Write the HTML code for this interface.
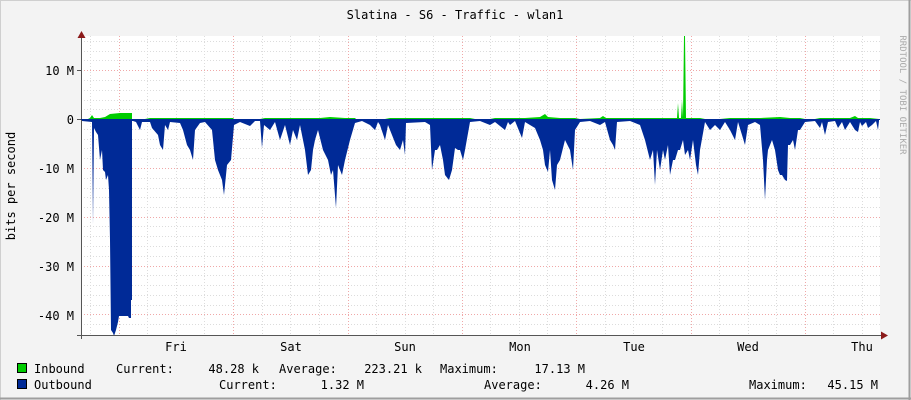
<!DOCTYPE html>
<html><head><meta charset="utf-8"><style>
html,body{margin:0;padding:0;background:#f3f3f3;}
svg{display:block;}
text{font-family:"DejaVu Sans Mono","Liberation Mono",monospace;font-size:12px;fill:#000;}
</style></head><body>
<svg width="911" height="400" xmlns="http://www.w3.org/2000/svg">
<rect x="0" y="0" width="911" height="400" fill="#f3f3f3"/>
<line x1="0" y1="0.5" x2="911" y2="0.5" stroke="#cfcfcf"/>
<line x1="0.5" y1="0" x2="0.5" y2="400" stroke="#cfcfcf"/>
<line x1="909.5" y1="0" x2="909.5" y2="400" stroke="#9e9e9e" stroke-width="2"/>
<line x1="0" y1="398.5" x2="911" y2="398.5" stroke="#9e9e9e" stroke-width="2"/>
<rect x="81" y="36" width="799" height="299" fill="#fff"/>
<g stroke="#dcdcdc" stroke-dasharray="1,2" stroke-width="1">
<path d="M81 41.5H880M81 51.5H880M81 60.5H880M81 80.5H880M81 90.5H880M81 100.5H880M81 109.5H880M81 129.5H880M81 139.5H880M81 148.5H880M81 158.5H880M81 178.5H880M81 188.5H880M81 197.5H880M81 207.5H880M81 226.5H880M81 236.5H880M81 246.5H880M81 256.5H880M81 275.5H880M81 285.5H880M81 295.5H880M81 305.5H880M81 324.5H880"/>
<path d="M90.5 36V335M147.5 36V335M176.5 36V335M204.5 36V335M262.5 36V335M290.5 36V335M319.5 36V335M376.5 36V335M405.5 36V335M433.5 36V335M490.5 36V335M519.5 36V335M547.5 36V335M605.5 36V335M633.5 36V335M662.5 36V335M719.5 36V335M748.5 36V335M776.5 36V335M833.5 36V335M862.5 36V335"/>
</g>
<g stroke="#f0a8a8" stroke-dasharray="1,2" stroke-width="1">
<path d="M81 70.5H880M81 168.5H880M81 217.5H880M81 266.5H880M81 314.5H880"/>
<path d="M119.5 36V335M233.5 36V335M348.5 36V335M462.5 36V335M576.5 36V335M691.5 36V335M805.5 36V335"/>
</g>
<path fill="#002a97" d="M82 119 L82 121 L92 122 L93 224 L94 128 L96 132 L98 135 L100 160 L102 150 L103 170 L105 172 L106 180 L108 175 L109 190 L110 240 L111 330 L113 333 L114 336 L116 330 L118 322 L119 316 L128 316 L129 318 L131 318 L131 300 L132 300 L132 121 L133 121 L136 122 L140 130 L142 122 L150 122 L152 128 L158 135 L160 145 L163 150 L165 125 L168 130 L170 122 L180 123 L183 130 L187 145 L190 150 L193 160 L195 130 L200 123 L205 122 L212 130 L215 160 L218 170 L222 180 L224 195 L227 165 L231 160 L234 125 L240 122 L250 126 L255 121 L260 121 L262 148 L264 125 L270 130 L275 122 L280 140 L285 125 L290 145 L293 130 L297 140 L300 125 L305 150 L308 175 L311 170 L313 150 L315 140 L318 130 L323 150 L328 160 L331 175 L333 170 L336 208 L338 165 L342 175 L345 160 L350 140 L355 123 L362 121 L370 125 L375 130 L378 122 L380 125 L385 140 L388 125 L396 145 L400 150 L403 140 L405 155 L406 123 L425 122 L430 125 L432 170 L435 150 L437 150 L440 145 L443 160 L445 175 L449 180 L452 170 L455 148 L458 150 L460 150 L463 160 L465 150 L470 122 L480 121 L490 125 L495 122 L500 126 L505 130 L508 122 L510 125 L515 121 L522 138 L525 122 L535 128 L540 140 L543 150 L545 165 L548 172 L550 150 L552 180 L555 190 L557 165 L560 160 L565 140 L570 150 L573 170 L575 130 L580 122 L590 121 L600 125 L605 122 L610 140 L613 145 L615 150 L617 122 L630 121 L640 125 L645 140 L650 160 L653 150 L655 185 L657 150 L660 170 L663 150 L665 160 L668 145 L670 175 L673 160 L675 160 L678 150 L680 150 L683 140 L685 155 L688 150 L690 160 L693 140 L696 165 L698 175 L700 150 L705 122 L710 130 L715 125 L720 130 L725 122 L730 130 L735 140 L738 122 L742 135 L745 145 L748 125 L755 122 L760 125 L763 160 L765 200 L767 160 L768 150 L772 140 L775 150 L778 170 L780 175 L782 175 L785 180 L787 181 L788 145 L790 145 L793 140 L795 150 L798 130 L800 130 L805 122 L815 121 L820 128 L822 122 L825 135 L828 122 L835 121 L838 128 L842 122 L845 130 L850 122 L855 130 L858 132 L860 122 L862 126 L866 122 L868 128 L872 125 L876 121 L878 130 L879 121 L879 119 Z"/>
<path fill="#00cc00" d="M82 119 L88 119 L90 118 L92 115 L94 118 L100 118 L105 117 L110 114 L120 113 L132 113 L132 119 L145 119 L150 118 L160 118 L175 118 L200 118 L225 118 L233 118 L234 119 L260 119 L265 118 L290 118 L300 118 L320 118 L330 117 L345 118 L355 118 L356 119 L385 119 L390 118 L410 118 L420 118 L425 118 L430 118 L445 118 L470 118 L475 119 L490 119 L495 118 L510 118 L525 118 L540 117 L545 114 L548 117 L560 118 L575 118 L580 119 L600 118 L603 116 L606 118 L640 118 L660 118 L675 118 L677 118 L678 103 L679 118 L681 118 L682 100 L683 118 L684 36 L685 36 L686 118 L690 118 L700 118 L705 119 L720 119 L730 118 L745 118 L760 118 L780 117 L790 118 L800 118 L805 119 L815 119 L820 118 L840 118 L850 118 L855 116 L858 118 L870 118 L879 119 Z"/>
<line x1="81.5" y1="32" x2="81.5" y2="339" stroke="#555"/>
<line x1="77" y1="335.5" x2="884" y2="335.5" stroke="#555"/>
<line x1="77" y1="70.5" x2="81" y2="70.5" stroke="#555"/>
<line x1="77" y1="119.5" x2="81" y2="119.5" stroke="#555"/>
<line x1="81" y1="119.5" x2="880" y2="119.5" stroke="#002a97" stroke-width="1"/>
<path d="M77.5 38 L81.5 31 L85.5 38 Z" fill="#8b1a1a"/>
<path d="M881 331.5 L888 335.5 L881 339.5 Z" fill="#8b1a1a"/>
<text x="455" y="19" text-anchor="middle">Slatina - S6 - Traffic - wlan1</text>
<g text-anchor="end">
<text x="74" y="75">10 M</text>
<text x="74" y="124">0</text>
<text x="74" y="173">-10 M</text>
<text x="74" y="222">-20 M</text>
<text x="74" y="271">-30 M</text>
<text x="74" y="320">-40 M</text>
</g>
<text transform="translate(15,186) rotate(-90)" text-anchor="middle">bits per second</text>
<text transform="translate(900,95) rotate(90)" text-anchor="middle" style="font-size:9px;fill:#aaa">RRDTOOL / TOBI OETIKER</text>
<g text-anchor="middle">
<text x="176" y="351">Fri</text>
<text x="291" y="351">Sat</text>
<text x="405" y="351">Sun</text>
<text x="520" y="351">Mon</text>
<text x="634" y="351">Tue</text>
<text x="748" y="351">Wed</text>
<text x="862" y="351">Thu</text>
</g>
<rect x="17.5" y="363.5" width="9" height="9" fill="#00cc00" stroke="#000"/>
<rect x="17.5" y="379.5" width="9" height="9" fill="#002a97" stroke="#000"/>
<text x="34" y="373">Inbound</text>
<text x="116" y="373">Current:</text>
<text x="259" y="373" text-anchor="end">48.28 k</text>
<text x="279" y="373">Average:</text>
<text x="422" y="373" text-anchor="end">223.21 k</text>
<text x="440" y="373">Maximum:</text>
<text x="585" y="373" text-anchor="end">17.13 M</text>
<text x="34" y="389">Outbound</text>
<text x="219" y="389">Current:</text>
<text x="364" y="389" text-anchor="end">1.32 M</text>
<text x="484" y="389">Average:</text>
<text x="629" y="389" text-anchor="end">4.26 M</text>
<text x="749" y="389">Maximum:</text>
<text x="878" y="389" text-anchor="end">45.15 M</text>
</svg>
</body></html>
